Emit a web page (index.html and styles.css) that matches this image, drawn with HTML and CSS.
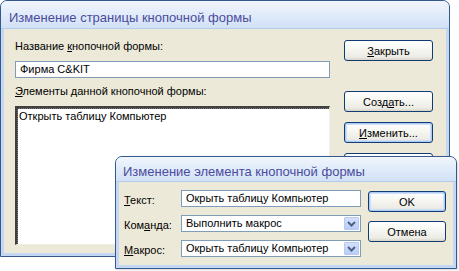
FILE: index.html
```html
<!DOCTYPE html>
<html lang="ru">
<head>
<meta charset="utf-8">
<title>Изменение страницы кнопочной формы</title>
<link rel="stylesheet" href="styles.css">
</head>
<body>
<div class="desk">
  <section class="win win-main">
    <header class="tb tb-main">Изменение страницы кнопочной формы</header>
    <div class="frame main-body">
      <div class="col">
        <div class="lbl">Название <u>к</u>нопочной формы:</div>
        <div class="field field-name">Фирма C&amp;KIT</div>
        <div class="lbl lbl2"><u>Э</u>лементы данной кнопочной формы:</div>
        <div class="list">
          <div class="list-inner">
            <div class="item">Открыть таблицу Компьютер</div>
          </div>
        </div>
      </div>
      <div class="btns">
        <button class="btn"><u>З</u>акрыть</button>
        <div class="btn-stack">
          <button class="btn">Созд<u>а</u>ть...</button>
          <button class="btn btn-focus"><u>И</u>зменить...</button>
          <button class="btn">Удалить</button>
        </div>
      </div>
    </div>
  </section>

  <section class="win win-sub">
    <header class="tb tb-sub">Изменение элемента кнопочной формы</header>
    <div class="frame sub-body">
      <div class="form">
        <div class="lbl row-lbl"><u>Т</u>екст:</div>
        <div class="field row-field">Окрыть таблицу Компьютер</div>
        <div class="lbl row-lbl">Ком<u>а</u>нда:</div>
        <div class="field row-field select">
          <span class="sel-text">Выполнить макрос</span>
          <span class="drop"><svg width="9" height="6" viewBox="0 0 9 6"><polyline points="1,1 4.5,4.5 8,1" fill="none" stroke="#4d6185" stroke-width="2"/></svg></span>
        </div>
        <div class="lbl row-lbl"><u>М</u>акрос:</div>
        <div class="field row-field select">
          <span class="sel-text">Окрыть таблицу Компьютер</span>
          <span class="drop"><svg width="9" height="6" viewBox="0 0 9 6"><polyline points="1,1 4.5,4.5 8,1" fill="none" stroke="#4d6185" stroke-width="2"/></svg></span>
        </div>
      </div>
      <div class="sub-btns">
        <button class="btn btn-sub btn-default">OK</button>
        <button class="btn btn-sub">Отмена</button>
      </div>
    </div>
  </section>
</div>
</body>
</html>
```
FILE: styles.css
```css
* { box-sizing: border-box; }
html, body {
  margin: 0;
  padding: 0;
  background: #ffffff;
}
body {
  font-family: "Liberation Sans", Arial, sans-serif;
  font-size: 11px;
  color: #000;
}
.desk {
  position: relative;
  width: 459px;
  height: 271px;
  overflow: hidden;
}
u { text-decoration: underline; text-underline-offset: 1px; }

.win {
  position: absolute;
  display: flex;
  flex-direction: column;
  border: 1px solid #34598a;
  border-radius: 7px 7px 0 0;
  background: #c4d8f4;
  overflow: hidden;
}
.win-main {
  left: 0;
  top: 0;
  width: 450px;
  height: 257px;
}
.win-sub {
  left: 115px;
  top: 156px;
  width: 342px;
  height: 113px;
  box-shadow: 1px 1px 2px rgba(0,0,0,0.15);
}

.tb {
  font-size: 13px;
  line-height: 15px;
  color: #4b4c9c;
  background: linear-gradient(#f1f6fd 0%, #e2ecfa 45%, #d2e1f7 100%);
  border-bottom: 1px solid #b3cbec;
  white-space: nowrap;
}
.tb-main {
  height: 28px;
  padding: 9px 0 0 8px;
}
.tb-sub {
  height: 25px;
  padding: 7px 0 0 7px;
}

.frame {
  flex: 1;
  background: #ece9d8;
  border: 3px solid #c4d8f4;
  border-top: none;
}

/* main dialog */
.main-body {
  display: flex;
  padding: 11px 0 0 11px;
}
.col {
  width: 315px;
  display: flex;
  flex-direction: column;
}
.lbl {
  line-height: 13px;
  white-space: nowrap;
}
.lbl2 { margin-top: 7px; }
.field {
  background: #fff;
  border: 1px solid #7f9db9;
  line-height: 15px;
  white-space: nowrap;
  overflow: hidden;
}
.field-name {
  margin-top: 8px;
  height: 17px;
  padding-left: 4px;
}
.list {
  margin-top: 8px;
  height: 139px;
  background: #fff;
  border-style: solid;
  border-width: 2px 1px 1px 2px;
  border-color: #404040 #f1efe2 #f1efe2 #404040;
  box-shadow: inset 1px 1px 0 #7a7a7a;
}
.list-inner {
  height: 100%;
  border-top: 1px dotted #444;
  border-left: 1px dotted #444;
}
.item {
  line-height: 13px;
  height: 15px;
  padding: 1px 0 0 1px;
  white-space: nowrap;
}

.btns {
  margin-left: 14px;
  width: 89px;
  display: flex;
  flex-direction: column;
}
.btn-stack {
  margin-top: 30px;
  display: flex;
  flex-direction: column;
  gap: 10px;
}
.btn {
  font-family: inherit;
  font-size: 11px;
  color: #000;
  height: 21px;
  width: 89px;
  padding: 0;
  border: 1px solid #0f3c73;
  border-radius: 3px;
  background: linear-gradient(#ffffff 0%, #f7f7f3 40%, #ecebe5 85%, #d8d3c6 100%);
  white-space: nowrap;
}
.btn-focus, .btn-default {
  box-shadow: inset 0 0 0 1px #aecaf5, inset 0 0 0 2px #cfdff8;
}

/* sub dialog */
.sub-body {
  display: flex;
  padding: 8px 0 0 5px;
}
.form {
  display: grid;
  grid-template-columns: 57px 180px;
  grid-auto-rows: 17px;
  row-gap: 8px;
}
.row-lbl {
  line-height: 17px;
  padding-top: 2px;
}
.row-field {
  height: 17px;
  padding-left: 4px;
}
.select {
  display: flex;
  align-items: center;
  padding-right: 1px;
}
.sel-text {
  flex: 1;
  overflow: hidden;
}
.drop {
  width: 15px;
  height: 13px;
  display: flex;
  align-items: center;
  justify-content: center;
  background: linear-gradient(#d3e0fb, #b8cdf8);
  border: 1px solid #b7c9f1;
  border-radius: 1px;
}
.sub-btns {
  margin-left: 7px;
  padding-top: 1px;
  display: flex;
  flex-direction: column;
  gap: 9px;
}
.btn-sub {
  width: 78px;
}
```
